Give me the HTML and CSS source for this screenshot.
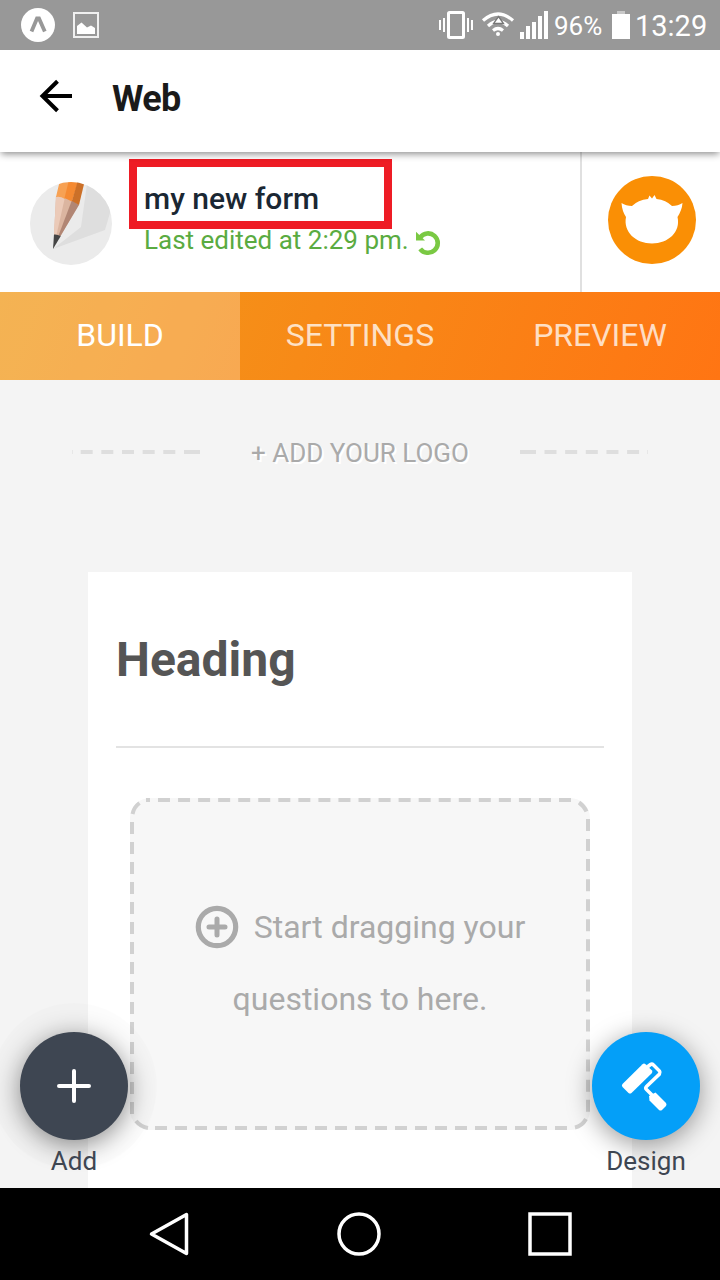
FILE: index.html
```
<!DOCTYPE html>
<html lang="en">
<head>
<meta charset="utf-8">
<title>Web</title>
<link rel="stylesheet" href="styles.css">
</head>
<body>
<div class="screen">
  <div class="status">
    <svg class="status-left" width="100" height="50" viewBox="0 0 100 50">
      <circle cx="38" cy="25" r="17" fill="#fff"/>
      <path d="M31.500 31.500 L37 18.500 H39 L44.800 31.500" fill="none" stroke="#989898" stroke-width="3.800"/>
      <rect x="74" y="13" width="24" height="24" fill="none" stroke="#f0f0f0" stroke-width="2"/>
      <path d="M77 34 V26 L81.500 22.500 L87 27.500 L91 25.500 L95 28 V34 Z" fill="#fff"/>
    </svg>
    <svg class="status-signals" width="112" height="50" viewBox="438 0 112 50">
      <rect x="448.500" y="12.500" width="15" height="25" rx="1" fill="none" stroke="#fff" stroke-width="3"/>
      <path d="M440 20V30M444 18V32M468 18V32M472 20V30" stroke="#fff" stroke-width="2"/>
      <path d="M483 20.500 Q498 7.500 513 20.500M488 26 Q498 17 508 26M493 30.500 Q498 26.500 503 30.500" fill="none" stroke="#fff" stroke-width="3.200"/>
      <path d="M498.500 16.500L503.500 23.500H493.500Z" fill="#fff" stroke="#777" stroke-width="1.300"/>
      <circle cx="498" cy="34" r="2" fill="#fff"/>
      <path d="M520 32h4v7h-4zM526 26h4v13h-4zM532 22h4v17h-4zM538 16h4v23h-4zM544 11h4v28h-4z" fill="#fff"/>
    </svg>
    <span class="percent">96%</span>
    <svg class="battery" width="18" height="50" viewBox="0 0 18 50"><path d="M5 11h8v3H5z" fill="#c8c8c8"/><path d="M0 14h18v25H0z" fill="#fff"/></svg>
    <span class="time">13:29</span>
  </div>
  <header class="appbar">
    <svg width="34" height="34" viewBox="0 0 34 34"><path d="M33 17H4M18.500 2.300L3.500 17L18.500 31.700" fill="none" stroke="#000" stroke-width="4"/></svg>
    <h1 class="title">Web</h1>
  </header>
  <section class="form-info">
    <svg class="pencil" width="82" height="83" viewBox="30 182 82 83">
      <defs><clipPath id="disc"><ellipse cx="71" cy="223.500" rx="41" ry="41.500"/></clipPath></defs>
      <g clip-path="url(#disc)">
        <path d="M30 182h82v83H30z" fill="#ebebeb"/>
        <path d="M87.500 180L81 227L53 249L105 230L112 206V180Z" fill="#dedede"/>
        <path d="M56 196L54 235L60.500 236L79 204L70 198Z" fill="#dbb5a0"/>
        <path d="M56 196L54 235L56.500 235L65 197Z" fill="#ebcab8"/>
        <path d="M72 200L58.500 235.500L60.500 236L79 205Z" fill="#b18674"/>
        <path d="M60 180L56 197Q60 196 65 199L70 180Z" fill="#f7a153"/>
        <path d="M69 180L64.500 198L72 201.500L78 182V180Z" fill="#f58a32"/>
        <path d="M78 180L72 201L79 205L85 180Z" fill="#cc7028"/>
        <path d="M54 234.500Q57 234 60.800 236L53 249Z" fill="#454545"/>
      </g>
    </svg>
    <div class="form-text">
      <div class="form-name">my new form</div>
      <div class="edited"><span class="edited-text">Last edited at 2:29 pm.</span>
        <svg width="26" height="26" viewBox="0 0 26 26"><path d="M5.200 7.400A9.700 9.700 0 1 1 5.200 18.800" fill="none" stroke="#7ac943" stroke-width="4.600"/><path d="M1 1.700L10 10.500H1Z" fill="#7ac943"/></svg>
      </div>
    </div>
    <div class="account">
      <svg width="88" height="88" viewBox="608 176 88 88">
        <circle cx="652" cy="220" r="44" fill="#fa8f05"/>
        <path d="M621.500 203Q626 206 632 206Q638 200 648 199L649.500 195.500L652 198.500L654.500 195L656.500 199Q666 200 672 206Q678 206 682.500 203Q682 210 677.500 217C681 232 668 243.500 652 243.500S623 232 626 217Q622 211 621.500 203Z" fill="#fff"/>
      </svg>
    </div>
  </section>
  <nav class="tabs">
    <div class="tab active"><span>BUILD</span></div>
    <div class="tab"><span>SETTINGS</span></div>
    <div class="tab"><span>PREVIEW</span></div>
  </nav>
  <main class="canvas">
    <div class="logo-row">
      <svg width="129" height="4" viewBox="72 0 129 4"><path d="M80.700 2H182" stroke="#dedede" stroke-width="4" stroke-dasharray="12 8.650"/><path d="M184 2H200M72 2h.6" stroke="#dedede" stroke-width="4"/></svg>
      <span class="add-logo">+ ADD YOUR LOGO</span>
      <svg width="128" height="4" viewBox="520 0 128 4"><path d="M520 2h16M647.400 2h.6" stroke="#dedede" stroke-width="4"/><path d="M544.500 2H642" stroke="#dedede" stroke-width="4" stroke-dasharray="12 8.650"/></svg>
    </div>
    <div class="sheet">
      <h2 class="heading">Heading</h2>
      <div class="drop">
        <svg class="drop-border" width="460" height="332" viewBox="130 798 460 332">
          <rect x="130" y="798" width="460" height="332" rx="20" fill="#f7f7f7"/>
          <g fill="none" stroke="#d1d1d1" stroke-width="4">
            <path d="M146 800h4"/>
            <path d="M158 800H571.500" stroke-dasharray="12 8.050"/>
            <path d="M132 822V1116M155 1128H568" stroke-dasharray="12 8"/>
            <path d="M588 819V1112" stroke-dasharray="12 8.050"/>
            <path d="M132.500 814Q134 807 139.500 803M136 1121Q141 1127 148 1128M586 1119Q582 1126 575 1127.500M579 802.500Q584 806 586.500 811.500"/>
          </g>
        </svg>
        <div class="drop-copy">
          <div class="line"><svg width="44" height="44" viewBox="0 0 44 44"><circle cx="22" cy="22" r="18.700" fill="none" stroke="#aaa" stroke-width="5.200"/><path d="M22 14V30M14 22H30" stroke="#aaa" stroke-width="5" stroke-linecap="round"/></svg><span>Start dragging your</span></div>
          <div class="line"><span>questions to here.</span></div>
        </div>
      </div>
    </div>
    <div class="fab add">
      <div class="fab-disc"><svg width="36" height="36" viewBox="0 0 36 36"><path d="M18 3V33M3 18H33" stroke="#fff" stroke-width="4" stroke-linecap="round"/></svg></div>
      <span class="fab-label">Add</span>
    </div>
    <div class="fab design">
      <div class="fab-disc"><svg width="108" height="108" viewBox="592 1032 108 108">
        <path d="M642.500 1064.200Q644 1063 645.500 1064.200L652 1070.500Q653 1072 651.500 1073.500L631.500 1093Q630 1094.200 628.500 1093L622.500 1087Q621.200 1085.500 622.500 1084Z" fill="#fff"/>
        <path d="M646 1068L650.500 1064.500Q652 1063.500 653.500 1065L659.500 1071Q660.500 1072.500 659.500 1074L646.500 1086.500Q645 1088 646.500 1089.500L654 1097" fill="none" stroke="#fff" stroke-width="3.500"/>
        <path d="M649 1096L655.500 1092.500L666 1103Q667 1104.500 666 1106L662 1110Q660.500 1111 659 1110L649.500 1100.500Z" fill="#fff"/>
      </svg></div>
      <span class="fab-label">Design</span>
    </div>
  </main>
  <footer class="navbar">
    <svg width="720" height="92" viewBox="0 1188 720 92" fill="none" stroke="#fff" stroke-width="3.500"><path d="M151.500 1234L186.500 1214.500V1253.500Z" stroke-linejoin="round"/><circle cx="359" cy="1234" r="20"/><rect x="530" y="1214" width="40" height="40"/></svg>
  </footer>
</div>
</body>
</html>
```

FILE: styles.css
```
body { margin: 0; font-family: Roboto, sans-serif; }
.screen { width: 720px; height: 1280px; overflow: hidden; display: flex; flex-direction: column; background: #fff; }
.screen span { white-space: nowrap; }
svg { display: block; flex: none; }
.status { flex: none; height: 50px; position: relative; z-index: 2; background: #989898; color: #fff; display: flex; align-items: center; }
.status-signals { margin-left: 338px; }
.percent { width: 58px; margin-left: 4px; font-size: 26px; line-height: 50px; padding-top: 1px; }
.time { margin-left: 5px; font-size: 29px; line-height: 50px; padding-top: 2px; }
.appbar { flex: none; height: 102px; position: relative; z-index: 1; background: #fff; box-shadow: 0 3px 7px -1px rgba(0,0,0,.45); display: flex; box-sizing: border-box; padding: 29px 0 0 39px; }
.title { margin: -1px 0 0 39px; font-size: 36px; line-height: 42px; font-weight: 700; color: #1a1a1a; letter-spacing: -.7px; }
.form-info { flex: none; height: 140px; display: flex; box-sizing: border-box; padding-left: 30px; }
.pencil { margin-top: 30px; }
.form-text { margin: 7px 0 0 17px; width: 451px; }
.form-name { box-sizing: border-box; width: 263px; height: 70px; border: 8px solid #ee1c25; padding: 14px 0 0 7px; font-size: 30px; line-height: 36px; font-weight: 500; color: #1a2733; white-space: nowrap; }
.edited { display: flex; padding-left: 15px; gap: 6px; height: 30px; color: #5aab41; font-size: 26px; line-height: 22px; }
.edited svg { margin-top: 1px; }
.account { width: 138px; border-left: 2px solid #e0e0e0; padding: 24px 0 0 26px; box-sizing: border-box; }
.tabs { flex: none; height: 88px; display: flex; background: linear-gradient(110deg, #f19a1a, #ff7513); }
.tab { width: 240px; text-align: center; font-size: 32px; line-height: 87px; color: rgba(255,255,255,.75); }
.tab.active { background: rgba(255,255,255,.25); color: #fff; }
.canvas { flex: none; height: 808px; position: relative; overflow: hidden; background: #f4f4f4; }
.logo-row { height: 144px; display: flex; align-items: center; justify-content: space-between; padding: 0 72px; }
.add-logo { color: #aaa; font-size: 26px; padding: 2px 1px 0 0; text-shadow: 2px 2px 0 #fff; }
.sheet { margin: 48px 88px 0; height: 616px; box-sizing: border-box; background: #fff; padding: 0 28px; }
.heading { margin: 0; height: 174px; line-height: 176px; font-size: 48px; font-weight: 700; color: #555; border-bottom: 2px solid #e3e3e3; }
.drop { display: grid; margin: 50px 14px 0; height: 332px; }
.drop-border, .drop-copy { grid-area: 1 / 1; }
.drop-copy { padding-top: 93px; color: #aaa; font-size: 32px; line-height: 72px; }
.line { display: flex; align-items: center; justify-content: center; gap: 15px; height: 72px; }
.fab { position: absolute; width: 108px; top: 652px; display: flex; flex-direction: column; align-items: center; }
.add { left: 20px; }
.design { left: 592px; }
.fab-disc { width: 108px; height: 108px; border-radius: 50%; display: flex; align-items: center; justify-content: center; }
.add .fab-disc { background: #3e4652; box-shadow: 0 5px 26px rgba(0,0,0,.45), 0 0 0 29px rgba(0,0,0,.01); }
.design .fab-disc { background: #049ff8; box-shadow: 0 5px 26px rgba(0,0,0,.4); }
.fab-label { font-size: 26px; line-height: 42px; color: #3e4652; }
.navbar { flex: none; height: 92px; background: #000; }
```
